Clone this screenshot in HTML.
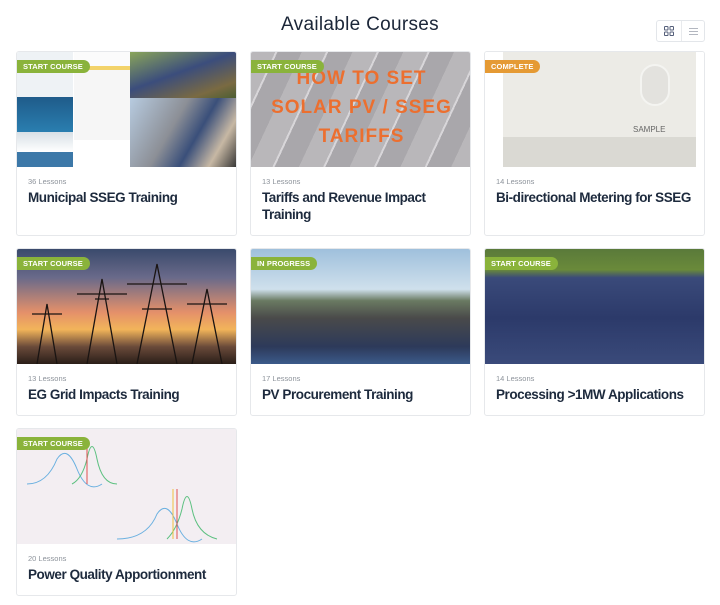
<!DOCTYPE html>
<html><head><meta charset="utf-8"><style>
*{box-sizing:border-box;margin:0;padding:0}
body{width:720px;height:605px;background:#fff;font-family:"Liberation Sans",Arial,sans-serif;position:relative;overflow:hidden}
h1{position:absolute;top:14px;left:0;width:720px;text-align:center;font-size:19px;font-weight:normal;color:#1b2638;letter-spacing:0.3px}
.tog{position:absolute;left:656px;top:20px;width:49px;height:22px;border:1px solid #e3e6ea;border-radius:3px;background:#fff}
.tog .d{position:absolute;left:24px;top:0;width:1px;height:20px;background:#e8eaed}
.card{position:absolute;width:221px;border:1px solid #e6e8eb;border-radius:3px;background:#fff;overflow:hidden}
.img{position:absolute;left:0;top:0;width:221px;height:115px;overflow:hidden}
.badge{position:absolute;left:0;top:8px;height:13px;padding:0 7px 0 6px;border-radius:0 7px 7px 0;color:#fff;font-size:7.5px;line-height:13px;font-weight:bold;letter-spacing:0.1px}
.g{background:#8ab33b}.o{background:#e59a34}
.les{position:absolute;left:11px;top:125px;font-size:7.5px;color:#8d939b}
.t{position:absolute;left:11px;top:137px;width:208px;font-size:13.5px;font-weight:bold;color:#1d2a3d;line-height:17px;letter-spacing:-0.45px}
</style></head><body>
<h1>Available Courses</h1>
<div class="tog"><svg style="position:absolute;left:7px;top:5px" width="10" height="10" viewBox="0 0 10 10" fill="none" stroke="#555f7a" stroke-width="1"><rect x="0.5" y="0.5" width="3.5" height="3.5" rx=".8"/><rect x="6" y="0.5" width="3.5" height="3.5" rx=".8"/><rect x="0.5" y="6" width="3.5" height="3.5" rx=".8"/><rect x="6" y="6" width="3.5" height="3.5" rx=".8"/></svg><div class="d"></div><svg style="position:absolute;left:32px;top:7px" width="9" height="7" viewBox="0 0 9 7" stroke="#9aa0ac" stroke-width="0.8"><path d="M0 .5H9M0 3.5H9M0 6.5H9"/></svg></div>

<div class="card" style="left:16px;top:51px;height:185px">
<div class="img" style="background:#fff">
<div style="position:absolute;left:0;top:0;width:56px;height:115px;background:linear-gradient(180deg,#eef2f5 0 45px,#1f5b8a 45px,#2a7eb0 80px,#d8e0e6 80px,#fff 100px,#3c78a8 100px)"></div>
<div style="position:absolute;left:57px;top:0;width:56px;height:115px;background:linear-gradient(180deg,#fbfbfb 0 14px,#f3d36a 14px 18px,#f6f6f6 18px 88px,#fff 88px)"></div>
<div style="position:absolute;left:113px;top:0;width:108px;height:46px;background:linear-gradient(160deg,#8aa55a,#3b4d7c 45%,#7a6a42 80%,#4a5e32)"></div>
<div style="position:absolute;left:113px;top:46px;width:108px;height:69px;background:linear-gradient(120deg,#b7cbe0,#8c8f96 40%,#3a4f7a 60%,#c7b8a4 80%,#2f2f2f)"></div>
</div>
<div class="badge g">START COURSE</div>
<div class="les">36 Lessons</div><div class="t">Municipal SSEG Training</div></div>

<div class="card" style="left:250px;top:51px;height:185px">
<div class="img" style="background:repeating-linear-gradient(115deg,#b9b7ba 0 22px,#d8d6d9 22px 24px,#a9a7ab 24px 46px);text-align:center;color:#ec6f2f;font-size:19px;font-weight:bold;line-height:29px;padding-top:12px;letter-spacing:1px">HOW TO SET<br>SOLAR PV / SSEG<br>TARIFFS</div>
<div class="badge g">START COURSE</div>
<div class="les">13 Lessons</div><div class="t">Tariffs and Revenue Impact Training</div></div>

<div class="card" style="left:484px;top:51px;height:185px">
<div class="img" style="background:#fff">
<div style="position:absolute;left:18px;top:0;width:193px;height:115px;background:linear-gradient(180deg,#ecebe6 0 85px,#dad9d3 85px)"></div>
<div style="position:absolute;left:155px;top:12px;width:30px;height:42px;border:2px solid #f4f4f1;border-radius:15px;background:#e3e2de"></div>
<div style="position:absolute;left:148px;top:73px;font-size:8px;color:#666">SAMPLE</div>
</div>
<div class="badge o">COMPLETE</div>
<div class="les">14 Lessons</div><div class="t">Bi-directional Metering for SSEG</div></div>

<div class="card" style="left:16px;top:248px;height:168px">
<div class="img" style="background:linear-gradient(180deg,#3a4a6c 0,#6a6a8a 25%,#e4906a 55%,#f2b45a 70%,#6a4a3a 85%,#2a1e18)">
<svg width="221" height="115" style="position:absolute;left:0;top:0" stroke="#1a1412" fill="none" stroke-width="1.3"><path d="M70 115L85 30L100 115M78 50H92M60 45H110M120 115L140 15L160 115M110 35H170M125 60H155M175 115L190 40L205 115M170 55H210M20 115L30 55L40 115M15 65H45"/></svg></div>
<div class="badge g">START COURSE</div>
<div class="les">13 Lessons</div><div class="t">EG Grid Impacts Training</div></div>

<div class="card" style="left:250px;top:248px;height:168px">
<div class="img" style="background:linear-gradient(180deg,#9fc0dc 0,#cfe0ec 35%,#6a7a62 45%,#4a4a4a 60%,#2d3a5a 85%,#3b5a8a)"></div>
<div class="badge g">IN PROGRESS</div>
<div class="les">17 Lessons</div><div class="t">PV Procurement Training</div></div>

<div class="card" style="left:484px;top:248px;height:168px">
<div class="img" style="background:linear-gradient(180deg,#5a7a3a 0,#6a8a3a 18%,#3a4a7a 25%,#2c3a6a 60%,#3a4a7a)"></div>
<div class="badge g">START COURSE</div>
<div class="les">14 Lessons</div><div class="t">Processing &gt;1MW Applications</div></div>

<div class="card" style="left:16px;top:428px;height:168px">
<div class="img" style="background:#f3eef2">
<svg width="221" height="115" style="position:absolute;left:0;top:0" fill="none" stroke-width="1"><path d="M10 55Q30 55 40 30Q50 15 60 40T85 55" stroke="#6ab0e0"/><path d="M55 55Q65 50 70 30Q75 5 80 30T100 55" stroke="#5cc080"/><path d="M70 10V55" stroke="#e05050"/><path d="M100 110Q130 110 140 85Q150 70 160 95T185 110" stroke="#6ab0e0"/><path d="M150 110Q160 100 165 80Q170 55 175 80T200 110" stroke="#5cc080"/><path d="M160 60V110" stroke="#e05050"/><path d="M156 60V110" stroke="#f0c040"/></svg></div>
<div class="badge g">START COURSE</div>
<div class="les">20 Lessons</div><div class="t">Power Quality Apportionment</div></div>
</body></html>
